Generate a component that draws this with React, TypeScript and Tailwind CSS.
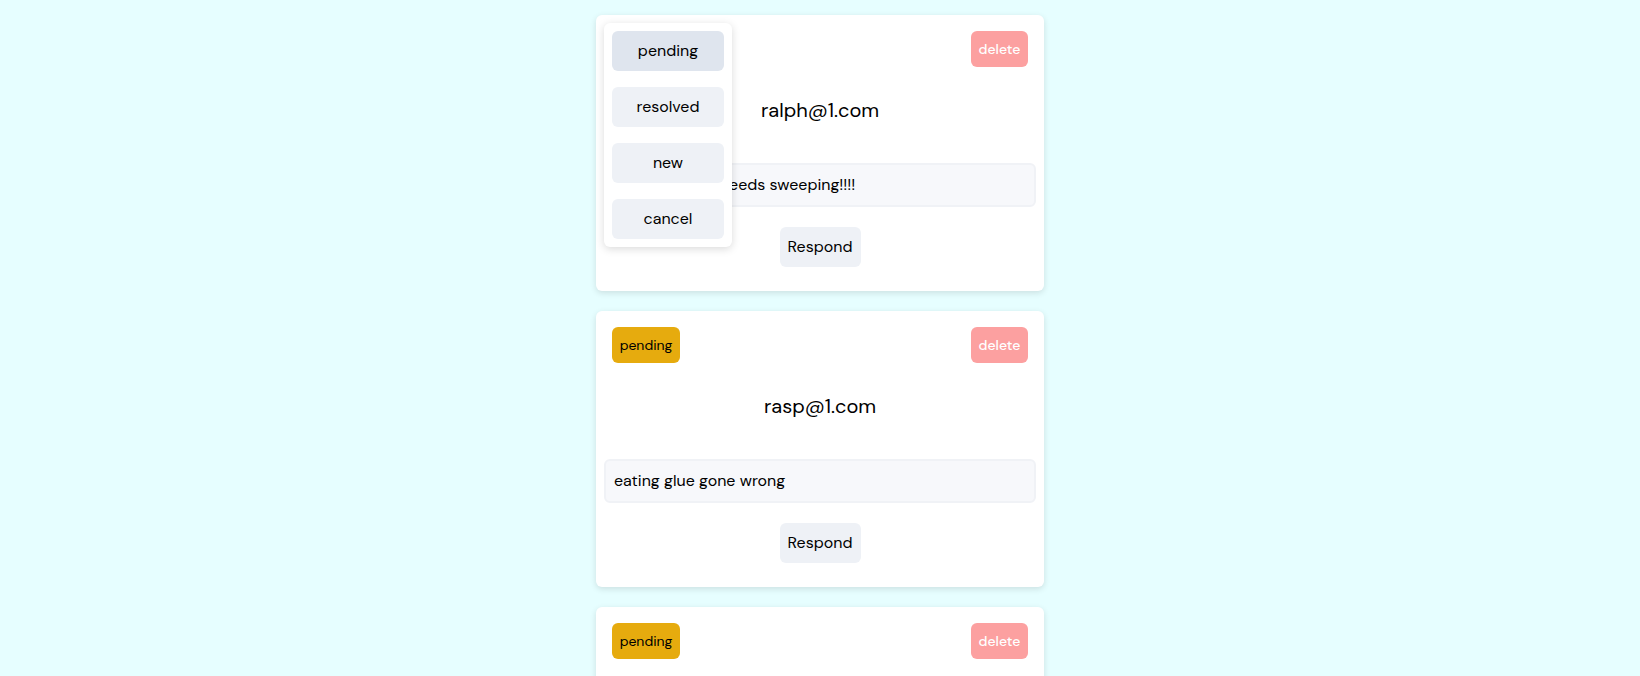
import React from "react";

const tickets = [
  { email: "ralph@1.com", message: "the bathroom needs sweeping!!!!", status: "pending" },
  { email: "rasp@1.com", message: "eating glue gone wrong", status: "pending" },
  { email: "rasp@1.com", message: "eating glue gone wrong", status: "pending" },
];

const statuses = ["pending", "resolved", "new", "cancel"];

const StatusMenu: React.FC = () => {
  return (
    <div className="absolute left-2 top-2 w-32 rounded-md bg-white p-2 shadow-[0_2px_8px_rgba(0,0,0,0.15)] flex flex-col gap-4 z-10">
      {statuses.map((s, i) => (
        <button
          key={s}
          className={
            "h-10 w-full rounded-md text-base text-black " +
            (i === 0 ? "bg-[#dfe5ee]" : "bg-[#eef1f6]")
          }
        >
          {s}
        </button>
      ))}
    </div>
  );
};

const Ticket: React.FC<{ email: string; message: string; status: string; open?: boolean }> = ({
  email,
  message,
  status,
  open,
}) => {
  return (
    <div className="relative w-[448px] rounded-md bg-white px-4 pt-4 pb-6 shadow-[0_2px_6px_rgba(0,0,0,0.12)]">
      {open && <StatusMenu />}
      <div className="flex justify-between items-center h-9">
        <button className="h-9 w-[68px] rounded-md bg-[#e6ab0e] text-sm text-black">
          {status}
        </button>
        <button className="h-9 w-[57px] rounded-md bg-[#fca0a0] text-sm font-medium text-white">
          delete
        </button>
      </div>
      <h3 className="mt-[29px] text-center text-xl leading-7 text-black">{email}</h3>
      <div className="-mx-2 mt-[39px] flex h-11 items-center rounded-md border-2 border-[#f0f2f6] bg-[#f7f8fb] px-2 text-base text-black">
        {message}
      </div>
      <div className="mt-5 flex justify-center">
        <button className="h-10 w-[81px] rounded-md bg-[#eef1f6] text-base text-black">
          Respond
        </button>
      </div>
    </div>
  );
};

export default function App() {
  return (
    <div
      className="min-h-screen bg-[#e6feff] flex flex-col items-center gap-5 pt-[15px] pb-10"
      style={{ fontFamily: '"DM Sans", Inter, "Open Sans", sans-serif' }}
    >
      {tickets.map((t, i) => (
        <Ticket key={i} {...t} open={i === 0} />
      ))}
    </div>
  );
}
